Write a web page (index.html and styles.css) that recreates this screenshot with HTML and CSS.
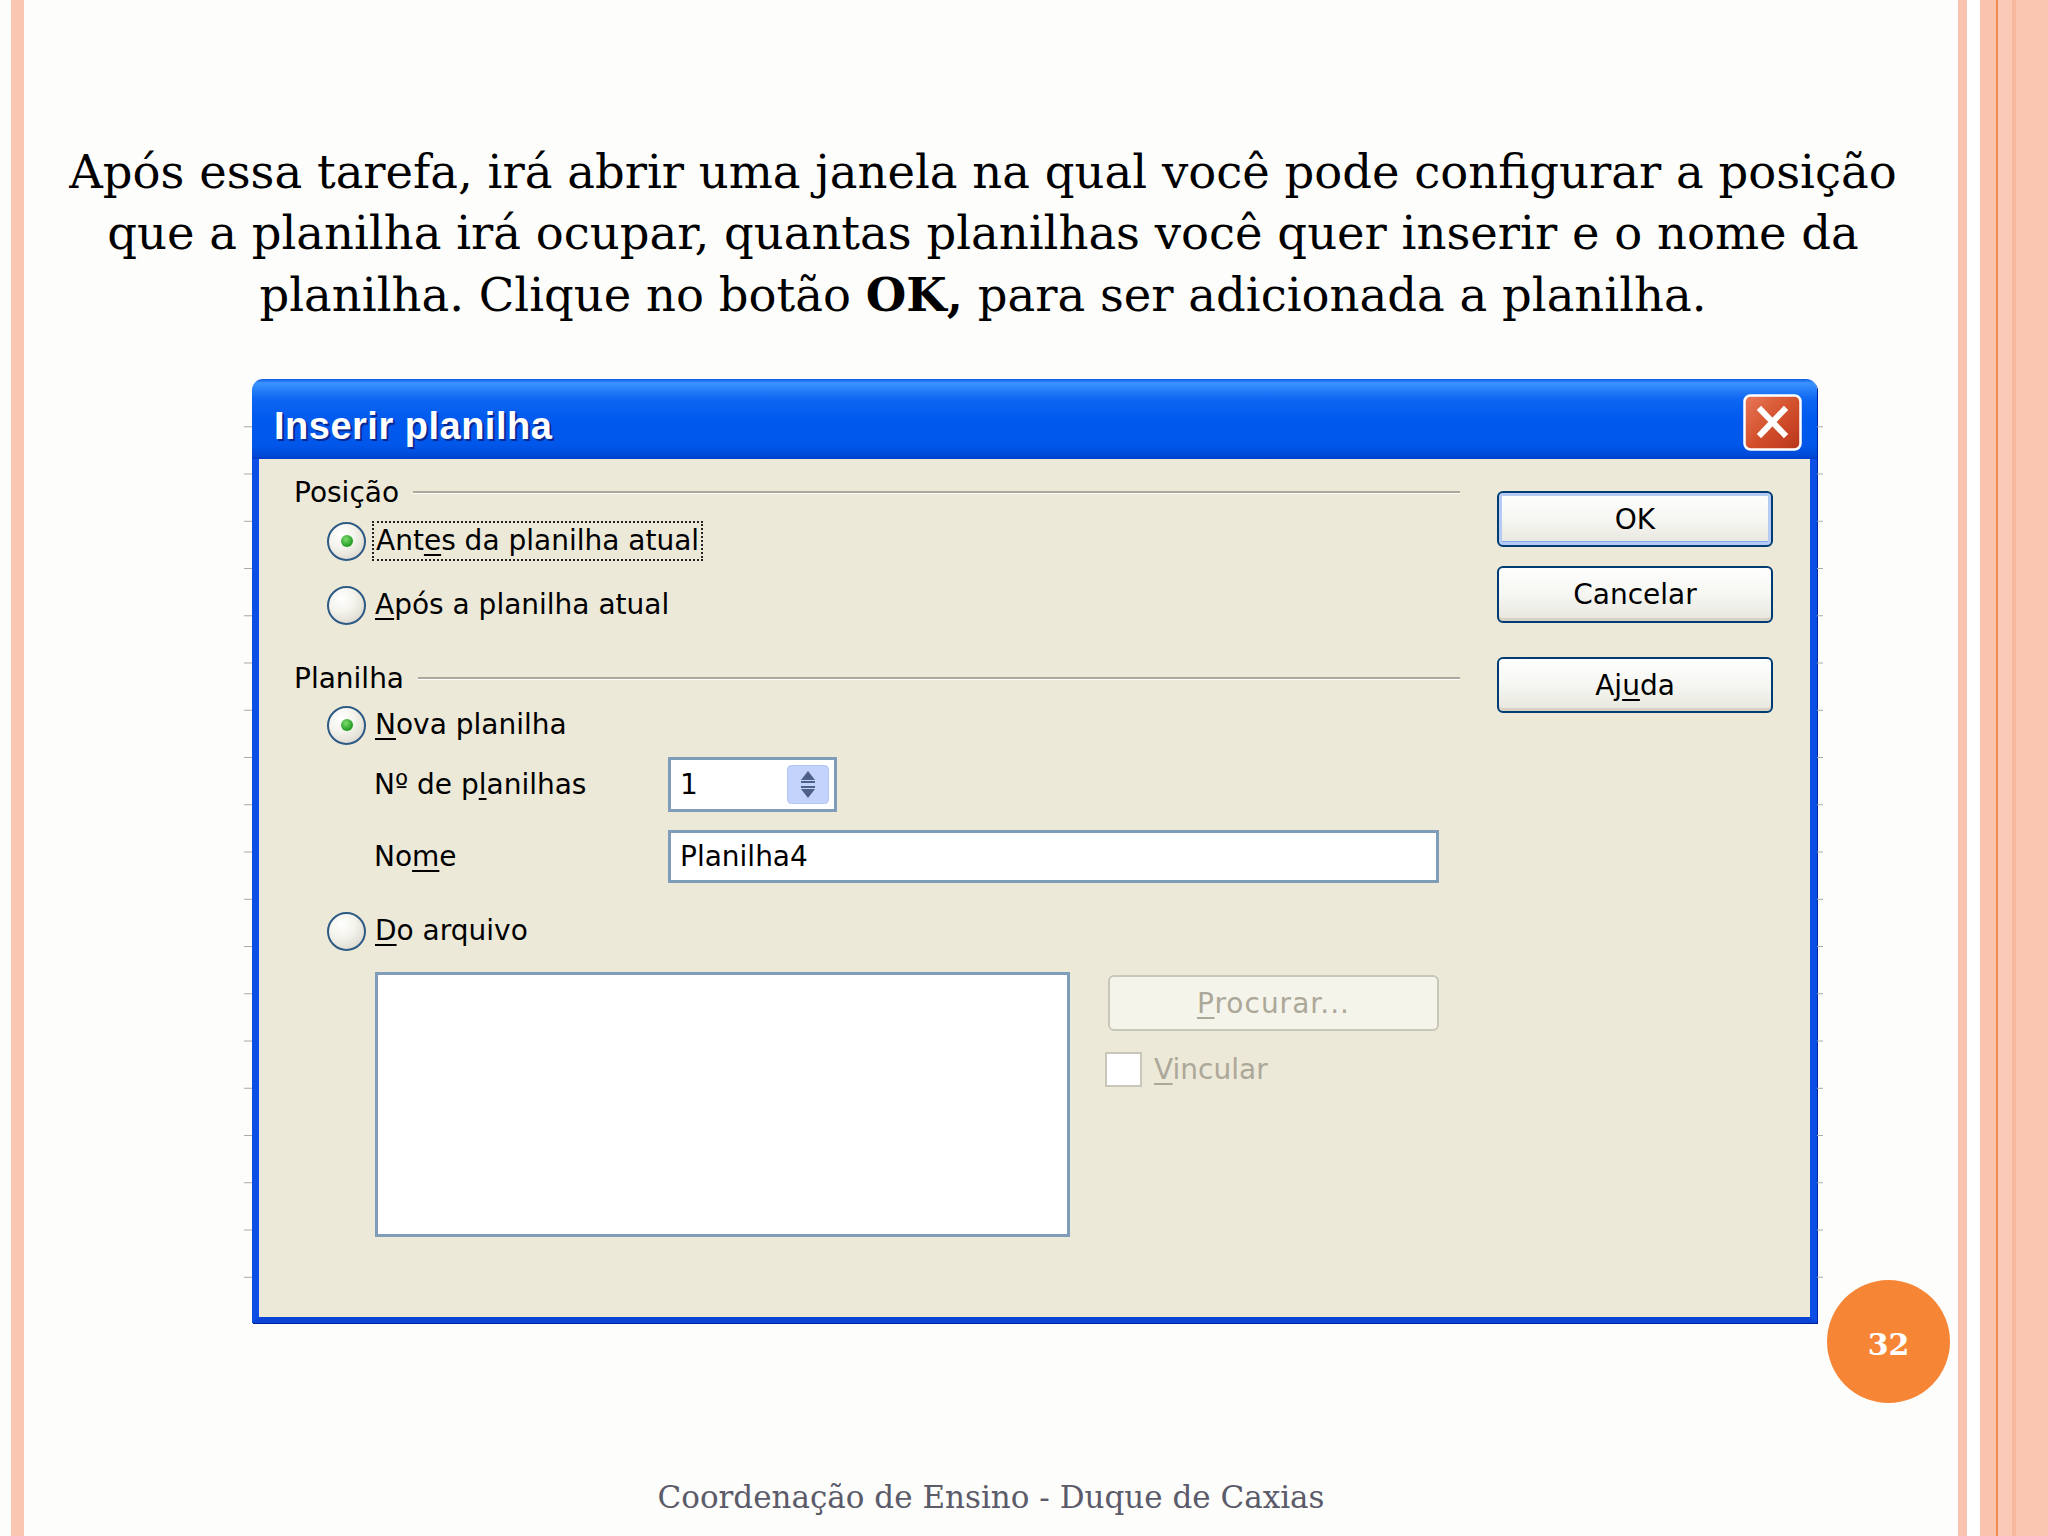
FILE: index.html
```html
<!DOCTYPE html>
<html lang="pt-BR">
<head>
  <meta charset="UTF-8">
  <title>Inserir planilha</title>
  <link rel="stylesheet" href="styles.css">
</head>
<body>
<div class="slide">
  <div class="edge-left"></div>

  <div class="content">
    <p class="intro">Após essa tarefa, irá abrir uma janela na qual você pode configurar a posição<br>que a planilha irá ocupar, quantas planilhas você quer inserir e o nome da<br>planilha. Clique no botão <b>OK,</b> para ser adicionada a planilha.</p>

    <!-- janela "Inserir planilha" -->
    <div class="window">
      <div class="titlebar">
        <span class="title">Inserir planilha</span>
        <span class="close">
          <svg width="59" height="57" viewBox="0 0 59 57">
            <defs>
              <linearGradient id="redg" x1="0" y1="0" x2="1" y2="1">
                <stop offset="0" stop-color="#e8795a"/>
                <stop offset="0.5" stop-color="#d4512d"/>
                <stop offset="1" stop-color="#b8341a"/>
              </linearGradient>
            </defs>
            <rect x="1.5" y="1.5" width="56" height="54" rx="6" fill="url(#redg)" stroke="#fff" stroke-width="2.5"/>
            <path d="M18 16 L41 40 M41 16 L18 40" stroke="#fff" stroke-width="6" stroke-linecap="square"/>
          </svg>
        </span>
      </div>

      <div class="client">
        <div class="form">
          <div class="group-head"><span>Posição</span><span class="rule"></span></div>
          <div class="radio-row">
            <span class="radio on"></span>
            <span class="label focus">Ant<u>e</u>s da planilha atual</span>
          </div>
          <div class="radio-row">
            <span class="radio"></span>
            <span class="label"><u>A</u>pós a planilha atual</span>
          </div>

          <div class="group-head second"><span>Planilha</span><span class="rule"></span></div>
          <div class="radio-row short">
            <span class="radio on"></span>
            <span class="label"><u>N</u>ova planilha</span>
          </div>
          <div class="field-row count">
            <span class="field-label">Nº de p<u>l</u>anilhas</span>
            <div class="textbox spin">
              <span>1</span>
              <svg class="spin-btn" width="42" height="39" viewBox="0 0 42 39">
                <rect x="0.5" y="0.5" width="41" height="38" rx="4" fill="#c3d3fb" stroke="#b2c4f2"/>
                <path d="M21 6 L28 15 L14 15 Z" fill="#4d6185"/>
                <rect x="14" y="16" width="14" height="2" fill="#4d6185"/>
                <rect x="14" y="21" width="14" height="2" fill="#4d6185"/>
                <path d="M14 24 L28 24 L21 33 Z" fill="#4d6185"/>
              </svg>
            </div>
          </div>
          <div class="field-row name">
            <span class="field-label">No<u>m</u>e</span>
            <div class="textbox wide"><span>Planilha4</span></div>
          </div>
          <div class="radio-row short from-file">
            <span class="radio"></span>
            <span class="label"><u>D</u>o arquivo</span>
          </div>

          <div class="file-area">
            <div class="listbox"></div>
            <div class="file-side">
              <div class="btn disabled"><span><u>P</u>rocurar...</span></div>
              <div class="check-row">
                <span class="checkbox"></span>
                <span class="muted"><u>V</u>incular</span>
              </div>
            </div>
          </div>
        </div>

        <div class="actions">
          <div class="btn default">OK</div>
          <div class="btn cancel">Cancelar</div>
          <div class="btn help">Aj<u>u</u>da</div>
        </div>
      </div>
    </div>

    <div class="footer">Coordenação de Ensino - Duque de Caxias</div>
  </div>

  <div class="edge-right">
    <div class="rs-thin"></div>
    <div class="rs-gap"></div>
    <div class="rs-band"></div>
  </div>

  <div class="page-num">32</div>
</div>
</body>
</html>
```

FILE: styles.css
```css
* {
  box-sizing: border-box;
}

body {
  margin: 0;
  background: #fdfdfb;
}

.slide {
  position: relative;
  display: flex;
  width: 2048px;
  height: 1536px;
  background: #fdfdfb;
  overflow: hidden;
}

/* faixas laterais */
.edge-left {
  width: 13px;
  margin-left: 11px;
  background: #f9c6b1;
}

.edge-right {
  display: flex;
  width: 90px;
}

.rs-thin {
  width: 9px;
  background: #f9c4af;
}

.rs-gap {
  width: 13px;
  background: #fefefe;
}

.rs-band {
  flex: 1;
  background: linear-gradient(to right,
    #f9c3ae 0, #f9c3ae 16px,
    #ee8a52 16px, #ee8a52 18px,
    #fbcab6 18px, #fbcab6 32px,
    #f7b99e 32px, #f7b99e 36px,
    #fac6b2 36px);
}

.content {
  flex: 1;
  display: flex;
  flex-direction: column;
}

.intro {
  margin: 0;
  padding: 142px 16px 0 0;
  font: 46.5px/61px "DejaVu Serif", serif;
  color: #000;
  text-align: center;
  white-space: nowrap;
}

.intro b {
  font-weight: bold;
}

/* janela estilo XP */
.window {
  position: relative;
  width: 1565px;
  height: 944px;
  margin: 53px 0 0 228px;
  display: flex;
  flex-direction: column;
  border-radius: 11px 11px 0 0;
  box-shadow: 1px 1px 0 #00229c;
}

/* marquinhas cinzas ao lado da janela */
.window::before,
.window::after {
  content: "";
  position: absolute;
  top: 1px;
  width: 8px;
  height: 905px;
  background: repeating-linear-gradient(to bottom,
    transparent 0, transparent 46px,
    #a8a8a8 46px, #a8a8a8 48px);
  background-size: 100% 47.25px;
}

.window::before {
  left: -8px;
}

.window::after {
  right: -6px;
  width: 6px;
}

.titlebar {
  flex: none;
  height: 80px;
  display: flex;
  align-items: center;
  justify-content: space-between;
  padding: 0 15px 0 22px;
  border-radius: 11px 11px 0 0;
  background: linear-gradient(to bottom,
    #0b5ae6 0, #3d93fd 4px, #2c84fb 9px, #0e66f2 20px,
    #0059ee 42px, #0057ea 66px, #004ad9 76px, #003dc6 80px);
}

.title {
  padding-top: 14px;
  font: bold 38px "Liberation Sans", Arial, sans-serif;
  letter-spacing: 0.5px;
  color: #fff;
  text-shadow: 2px 2px 0 #0a2890;
}

.close {
  display: flex;
  margin-top: 6px;
}

.client {
  flex: 1;
  display: flex;
  padding: 16px 37px 0 35px;
  background: #ece9d8;
  border: 7px solid #0b4fe6;
  border-top: 0;
  border-bottom: 6px solid #0a44d6;
  font: 28px "DejaVu Sans", sans-serif;
  color: #000;
}

.form {
  flex: 1;
}

.group-head {
  height: 34px;
  display: flex;
  align-items: center;
}

.group-head.second {
  margin-top: 24px;
}

.rule {
  flex: 1;
  height: 3px;
  margin-left: 14px;
  border-top: 2px solid #aca899;
  border-bottom: 1px solid #fff;
}

.radio-row {
  height: 64px;
  display: flex;
  align-items: center;
  padding-left: 33px;
}

.radio-row.short {
  height: 60px;
}

.radio-row.from-file {
  margin-top: 18px;
}

.radio {
  width: 39px;
  height: 39px;
  flex: none;
  display: grid;
  place-items: center;
  border-radius: 50%;
  border: 2px solid #2d5a85;
  background: radial-gradient(circle at 35% 30%, #fff 0, #f4f3ec 40%, #d4d1c4 100%);
}

.radio.on::after {
  content: "";
  width: 12px;
  height: 12px;
  border-radius: 50%;
  background: radial-gradient(circle at 40% 35%, #7cdc6c, #1f9a22 70%);
}

.label {
  margin-left: 9px;
  line-height: 34px;
  white-space: nowrap;
}

.label.focus {
  outline: 2px dotted #222;
  outline-offset: 1px;
  padding: 0 1px;
}

u {
  text-underline-offset: 4px;
  text-decoration-thickness: 2px;
}

.field-row {
  display: flex;
  align-items: center;
  padding-left: 80px;
}

.field-row.count {
  height: 55px;
  margin-top: 2px;
}

.field-row.name {
  height: 53px;
  margin-top: 18px;
}

.field-label {
  width: 294px;
  flex: none;
  white-space: nowrap;
}

.textbox {
  height: 100%;
  display: flex;
  align-items: center;
  padding-left: 9px;
  background: #fff;
  border: 3px solid #7f9db9;
}

.spin {
  width: 169px;
  justify-content: space-between;
  padding-right: 5px;
}

.spin-btn {
  display: block;
}

.wide {
  width: 771px;
}

.file-area {
  display: flex;
  margin-top: 11px;
  padding-left: 81px;
}

.listbox {
  width: 695px;
  height: 265px;
  background: #fff;
  border: 3px solid #7f9db9;
}

.file-side {
  margin-left: 35px;
}

.btn {
  display: flex;
  align-items: center;
  justify-content: center;
  height: 56px;
  border: 2px solid #003c74;
  border-radius: 6px;
  background: linear-gradient(#fefefe, #f6f6f2 50%, #e7e6de);
  box-shadow: inset 0 -3px 0 #d8d2c6;
}

.btn.default {
  margin-top: 16px;
  box-shadow: inset 0 0 0 3px #b6cbf3, inset 0 -4px 0 #82a5ec;
}

.btn.cancel {
  height: 57px;
  margin-top: 19px;
}

.btn.help {
  margin-top: 34px;
}

.btn.disabled {
  width: 331px;
  margin: 3px 0 0 3px;
  border-color: #c9c7ba;
  background: #f5f4ea;
  box-shadow: none;
  color: #aca899;
  letter-spacing: 1px;
}

.check-row {
  display: flex;
  align-items: center;
  margin-top: 21px;
}

.checkbox {
  width: 37px;
  height: 35px;
  background: #fff;
  border: 2px solid #c9c7ba;
}

.muted {
  margin-left: 12px;
  color: #aca899;
}

.actions {
  width: 276px;
  margin-left: 37px;
}

.footer {
  margin-top: auto;
  padding-bottom: 19px;
  font: 31px/40px "DejaVu Serif", serif;
  color: #5b5b6a;
  text-align: center;
}

.page-num {
  position: absolute;
  left: 1827px;
  top: 1280px;
  width: 123px;
  height: 123px;
  display: flex;
  align-items: center;
  justify-content: center;
  padding-top: 5px;
  border-radius: 50%;
  background: #f68636;
  color: #fff;
  font: bold 30px "DejaVu Serif", serif;
}
```
